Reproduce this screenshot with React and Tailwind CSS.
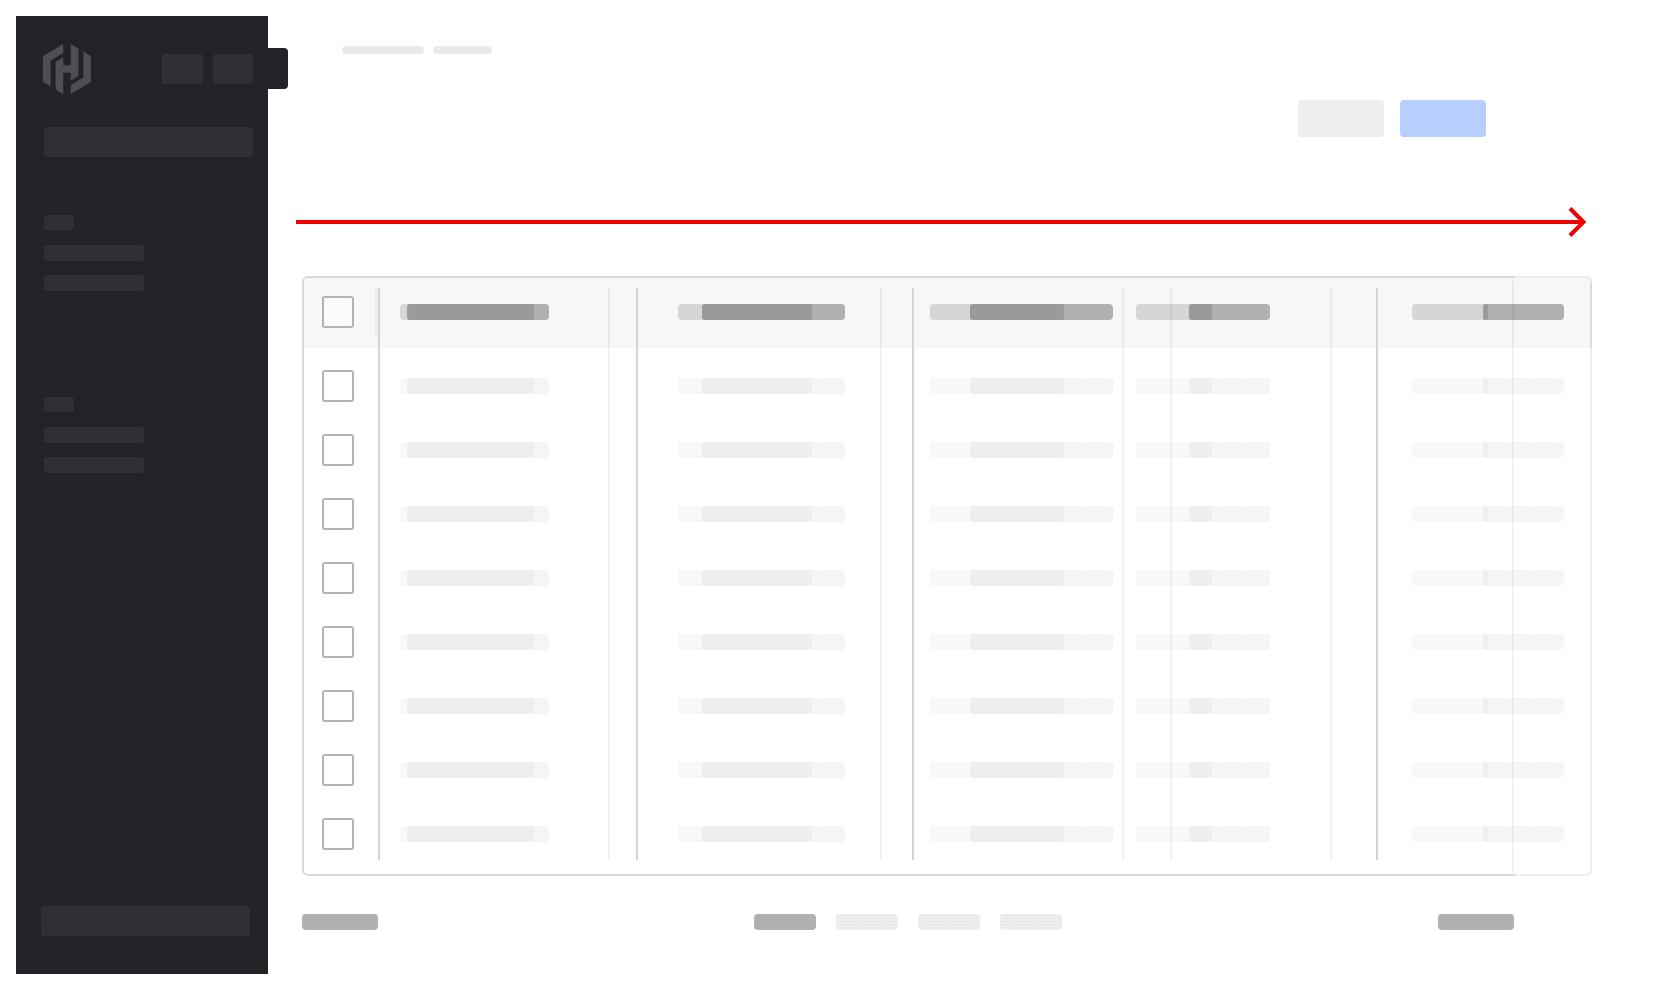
const columns = [
  { width: "w-[149px]", left: "w-[11px]", mid: "w-[127px]" },
  { width: "w-[167px]", left: "w-[28px]", mid: "w-[110px]" },
  { width: "w-[183px]", left: "w-[44px]", mid: "w-[94px]" },
  { width: "w-[134px]", left: "w-[57px]", mid: "w-[23px]" },
  { width: "w-[152px]", left: "w-[75px]", mid: "w-[5px]" },
];

const guides = [
  { x: "left-[74px]", strong: true },
  { x: "left-[304px]" },
  { x: "left-[332px]", strong: true },
  { x: "left-[576px]" },
  { x: "left-[608px]", strong: true },
  { x: "left-[818px]" },
  { x: "left-[866px]" },
  { x: "left-[1026px]" },
  { x: "left-[1072px]", strong: true },
];

const rows = [1, 2, 3, 4, 5, 6, 7, 8];

function Bar({ col, header }) {
  return (
    <div className={`flex h-4 ${col.width}`}>
      <div
        className={`-mr-1 rounded-l-[4px] ${col.left} ${
          header
            ? "bg-[#d5d6d8]"
            : "bg-[#f9f9f9] bg-[radial-gradient(#f6f6f6_1px,transparent_1px)] bg-[length:4px_4px]"
        }`}
      />
      <div
        className={`relative rounded-[3px] ${col.mid} ${header ? "bg-[#9a9a9a]" : "bg-[#eeeeee]"}`}
      />
      <div
        className={`-ml-1 flex-1 rounded-r-[4px] ${
          header
            ? "bg-[#b0b0b0] bg-[radial-gradient(#9a9a9a_0.7px,transparent_0.7px)] bg-[length:6px_6px]"
            : "bg-[#f6f6f6] bg-[radial-gradient(#f0f0f0_1px,transparent_1px)] bg-[length:3px_3px]"
        }`}
      />
    </div>
  );
}

function Row({ header }) {
  return (
    <div className="grid h-8 grid-cols-[96px_278px_252px_206px_276px_1fr] items-center">
      <div className="pl-[18px]">
        <div
          className={`size-8 rounded-[3px] border-2 border-[#b3b3b3] ${
            header ? "bg-[#fbfbfb]" : "bg-white"
          }`}
        />
      </div>
      {columns.map((col, i) => (
        <Bar key={i} col={col} header={header} />
      ))}
    </div>
  );
}

function Logo() {
  return (
    <svg viewBox="0 0 24 24" preserveAspectRatio="none" className="-ml-px h-[50px] w-12 fill-[#4e4f54]">
      <path d="M10.114 0L0 5.838v12.324l3.82 2.204V7.936l6.294-3.636zm3.772 0v10.214h-3.772V6.4L6.29 8.608v13.186L10.114 24V13.786h3.772v3.806l3.82-2.202V2.204zm6.294 3.63v12.434l-6.294 3.636V24L24 18.162V5.838z" />
    </svg>
  );
}

function NavGroup({ className }) {
  return (
    <div className={className}>
      <div className="mb-[15px] h-[15px] w-[30px] rounded-[3px] bg-[#2e3036]" />
      <div className="mb-[14px] h-4 w-[100px] rounded-[3px] bg-[#2e3036]" />
      <div className="h-4 w-[100px] rounded-[3px] bg-[#2e3036]" />
    </div>
  );
}

function Sidebar() {
  return (
    <aside className="relative flex h-[958px] w-[252px] shrink-0 flex-col bg-[#222327] pl-7 pr-[15px] pt-7">
      <div className="absolute left-[252px] top-8 h-[41px] w-5 rounded-r-[4px] bg-[#222327]" />
      <div className="flex items-center justify-between">
        <Logo />
        <div className="flex gap-2.5">
          <div className="h-[30px] w-[40.5px] rounded-[3px] bg-[#2e3036]" />
          <div className="h-[30px] w-[40.5px] rounded-[3px] bg-[#2e3036]" />
        </div>
      </div>
      <div className="mt-[33px] h-[30px] rounded-[3px] bg-[#2e3036]" />
      <NavGroup className="mt-[58px]" />
      <NavGroup className="mt-[106px]" />
      <div className="-ml-[3px] mb-[38px] mt-auto h-[30px] w-[209px] rounded-[3px] bg-[#2e3036]" />
    </aside>
  );
}

function Arrow() {
  return (
    <svg viewBox="0 0 1292 30" fill="none" stroke="#f00000" strokeWidth="4" className="-ml-1.5 mt-[70px] h-[30px] w-[1292px]">
      <path d="M0 15H1286" />
      <path d="M1274 1.5L1287.5 15L1274 28.5" />
    </svg>
  );
}

function DataTable() {
  return (
    <div className="relative mt-[39px] h-[600px] w-[1290px] rounded-md border-2 border-[#d9d9d9]">
      <div className="h-[70px] rounded-t-[4px] bg-[#f7f7f7] pt-[18px]">
        <Row header />
      </div>
      <div className="flex flex-col gap-8 pt-[22px]">
        {rows.map((r) => (
          <Row key={r} />
        ))}
      </div>

      {/* column guides sit over the rows */}
      <div className="absolute left-[71px] top-2.5 h-12 w-0.5 bg-[#ececec]" />
      {guides.map((g) => (
        <div
          key={g.x}
          className={`absolute top-2.5 h-[572px] w-0.5 ${g.x} ${g.strong ? "bg-[#d4d4d4]" : "bg-black/[0.05]"}`}
        />
      ))}

      {/* faded edge on the right */}
      <div className="absolute -bottom-0.5 -right-0.5 -top-0.5 w-[80px] rounded-md border-2 border-y-[#efefef] border-l-black/[0.05] border-r-[#ececec]" />
      <div className="absolute -right-0.5 top-1 h-[66px] w-0.5 bg-[#dcdcdc]" />
    </div>
  );
}

function PagePill() {
  return (
    <div className="h-4 w-[62px] rounded-[4px] bg-[#eeeeee] bg-[radial-gradient(#e0e0e0_1px,transparent_1px)] bg-[length:3px_3px]" />
  );
}

export default function App() {
  return (
    <div className="flex min-h-screen bg-white p-4 font-['Liberation_Sans',sans-serif]">
      <Sidebar />
      <main className="pl-[34px] pt-[30px]">
        <div className="ml-10 flex gap-[9px]">
          <div className="h-2 w-[82px] rounded-full bg-[#eaeaea]" />
          <div className="h-2 w-[59px] rounded-full bg-[#eaeaea]" />
        </div>
        <div className="mt-[46px] flex w-[1290px] justify-end gap-4 pr-[106px]">
          <div className="h-[37px] w-[86px] rounded-[4px] bg-[#eeeeee]" />
          <div className="h-[37px] w-[86px] rounded-[4px] bg-[#b7cffe]" />
        </div>
        <Arrow />
        <DataTable />
        <div className="mt-[38px] flex w-[1290px] justify-between pr-[78px]">
          <div className="h-4 w-[76px] rounded-[4px] bg-[#b0b0b0]" />
          <div className="flex gap-5">
            <div className="h-4 w-[62px] rounded-[4px] bg-[#b0b0b0]" />
            <PagePill />
            <PagePill />
            <PagePill />
          </div>
          <div className="h-4 w-[76px] rounded-[4px] bg-[#b0b0b0]" />
        </div>
      </main>
    </div>
  );
}
